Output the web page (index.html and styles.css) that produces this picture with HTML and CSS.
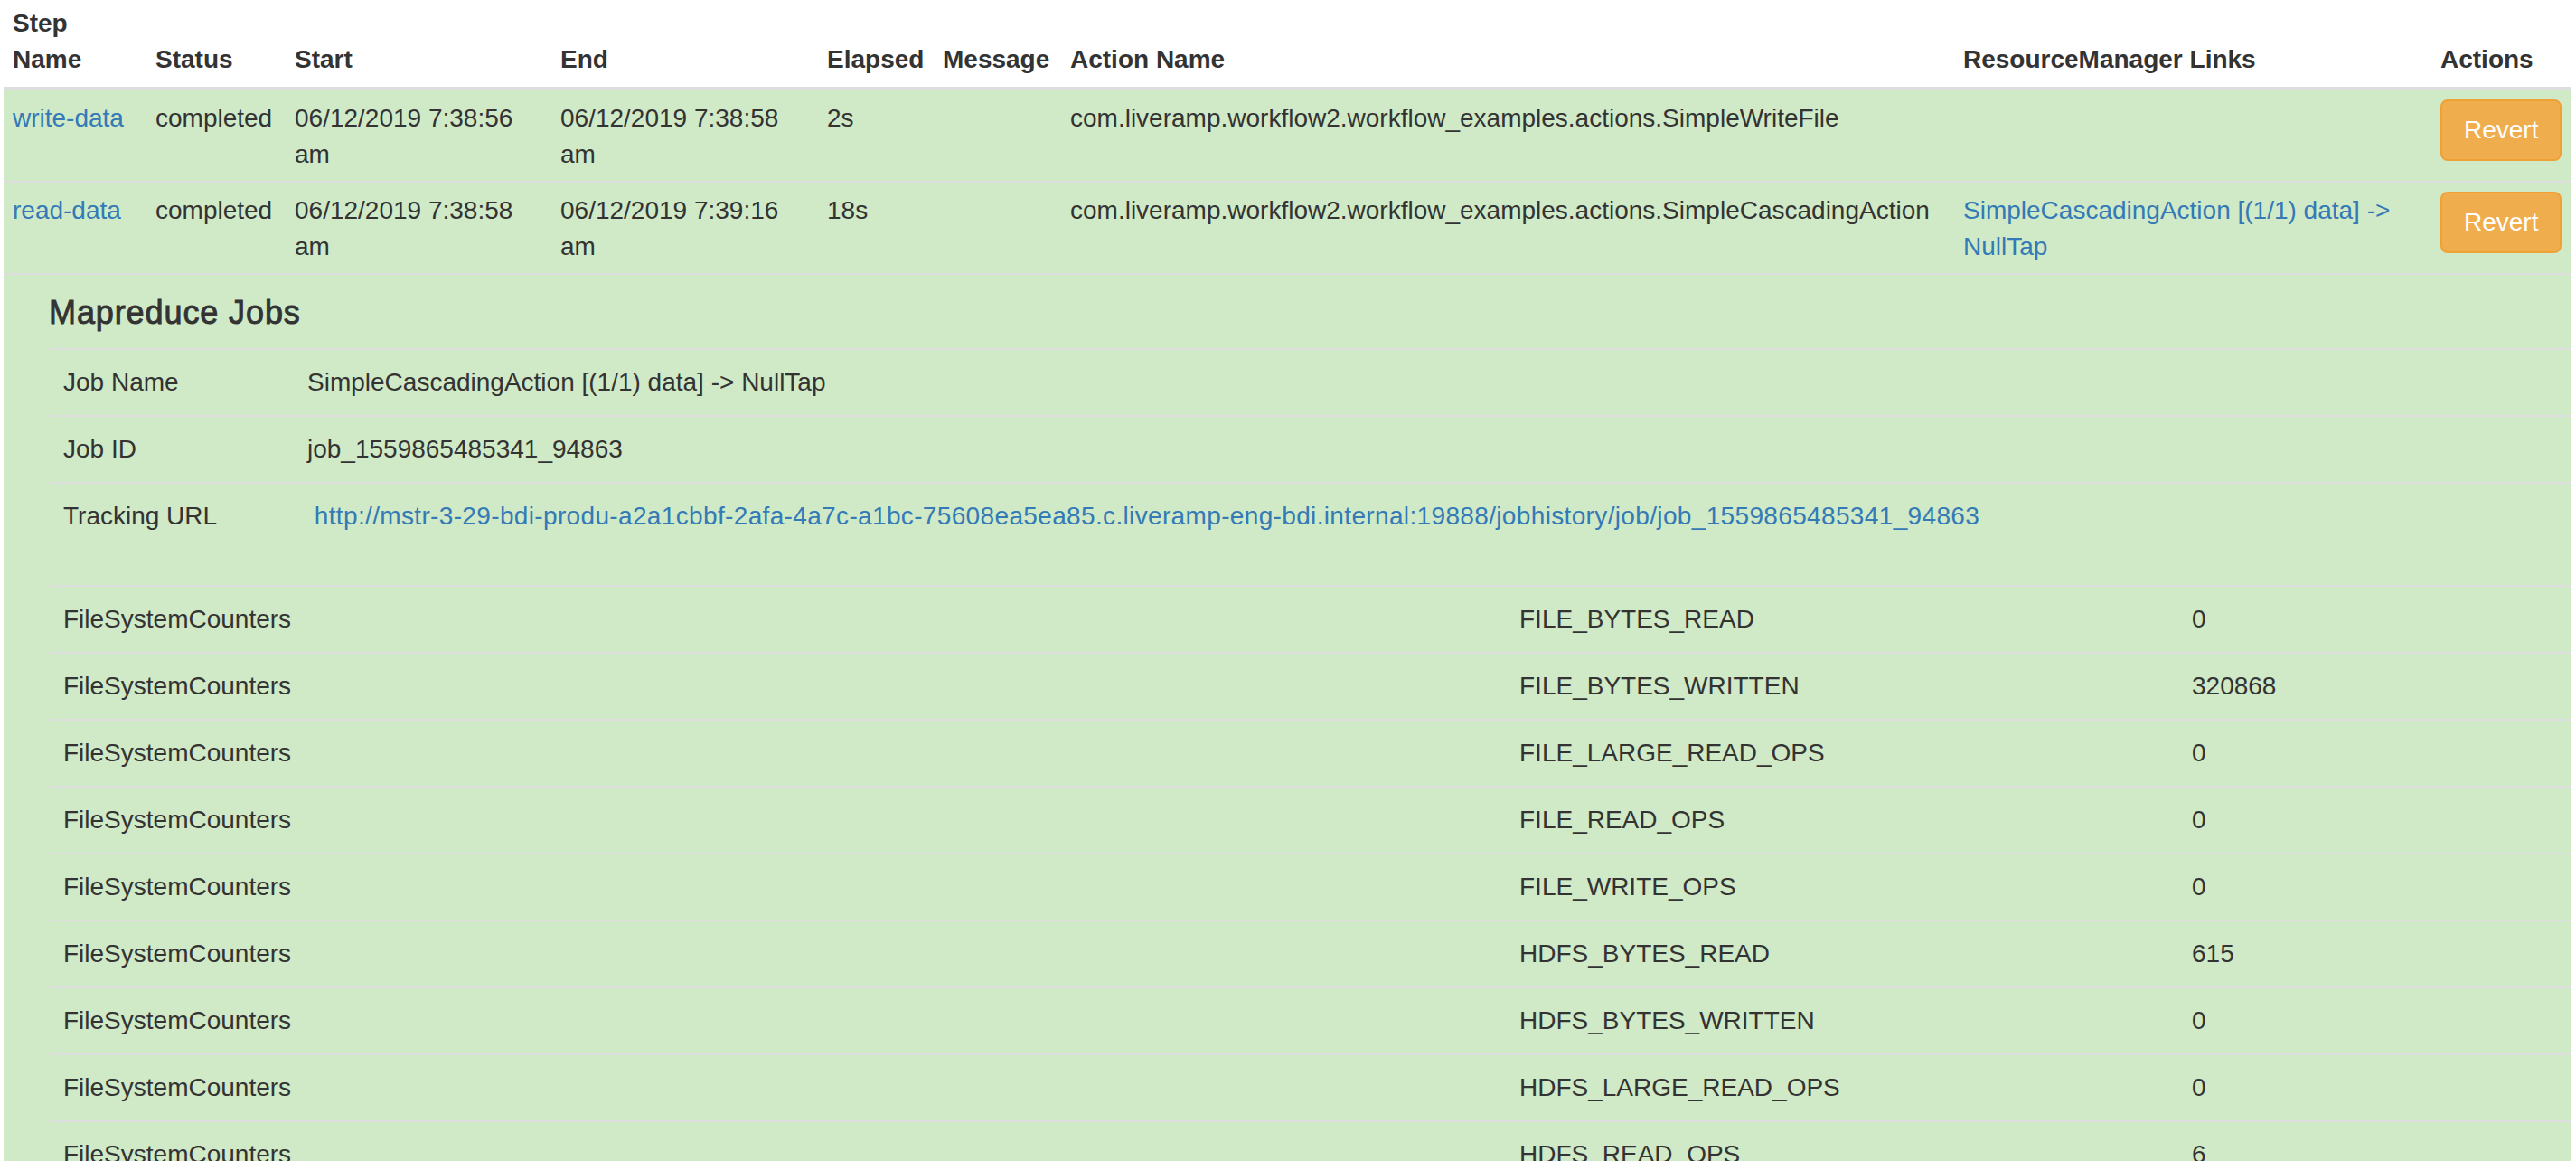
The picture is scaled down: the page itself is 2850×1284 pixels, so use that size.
FILE: index.html
```html
<!DOCTYPE html>
<html>
<head>
<meta charset="utf-8">
<title>Workflow Steps</title>
<link rel="stylesheet" href="styles.css">
</head>
<body>
<table class="steps">
  <colgroup>
    <col class="c-name"><col class="c-status"><col class="c-start"><col class="c-end"><col class="c-elapsed"><col class="c-message"><col class="c-action"><col class="c-links"><col class="c-actions">
  </colgroup>
  <thead>
    <tr>
      <th>Step Name</th>
      <th>Status</th>
      <th>Start</th>
      <th>End</th>
      <th>Elapsed</th>
      <th>Message</th>
      <th>Action Name</th>
      <th>ResourceManager Links</th>
      <th>Actions</th>
    </tr>
  </thead>
  <tbody>
    <tr class="success">
      <td><a href="#">write-data</a></td>
      <td>completed</td>
      <td>06/12/2019 7:38:56 am</td>
      <td>06/12/2019 7:38:58 am</td>
      <td>2s</td>
      <td></td>
      <td>com.liveramp.workflow2.workflow_examples.actions.SimpleWriteFile</td>
      <td></td>
      <td><button class="btn-warning">Revert</button></td>
    </tr>
    <tr class="success">
      <td><a href="#">read-data</a></td>
      <td>completed</td>
      <td>06/12/2019 7:38:58 am</td>
      <td>06/12/2019 7:39:16 am</td>
      <td>18s</td>
      <td></td>
      <td>com.liveramp.workflow2.workflow_examples.actions.SimpleCascadingAction</td>
      <td><a href="#">SimpleCascadingAction [(1/1) data] -&gt; NullTap</a></td>
      <td><button class="btn-warning">Revert</button></td>
    </tr>
    <tr class="success">
      <td class="jobs-cell" colspan="9">
        <h4 class="jobs-title">Mapreduce Jobs</h4>
        <table class="inner job-table">
          <colgroup><col class="j-label"><col></colgroup>
          <tbody>
            <tr><td>Job Name</td><td>SimpleCascadingAction [(1/1) data] -&gt; NullTap</td></tr>
            <tr><td>Job ID</td><td>job_1559865485341_94863</td></tr>
            <tr><td>Tracking URL</td><td>&nbsp;<a class="tracking-link" href="#">http://mstr-3-29-bdi-produ-a2a1cbbf-2afa-4a7c-a1bc-75608ea5ea85.c.liveramp-eng-bdi.internal:19888/jobhistory/job/job_1559865485341_94863</a></td></tr>
          </tbody>
        </table>
        <table class="inner counter-table">
          <colgroup><col class="k-group"><col class="k-name"><col></colgroup>
          <tbody>
            <tr><td>FileSystemCounters</td><td>FILE_BYTES_READ</td><td>0</td></tr>
            <tr><td>FileSystemCounters</td><td>FILE_BYTES_WRITTEN</td><td>320868</td></tr>
            <tr><td>FileSystemCounters</td><td>FILE_LARGE_READ_OPS</td><td>0</td></tr>
            <tr><td>FileSystemCounters</td><td>FILE_READ_OPS</td><td>0</td></tr>
            <tr><td>FileSystemCounters</td><td>FILE_WRITE_OPS</td><td>0</td></tr>
            <tr><td>FileSystemCounters</td><td>HDFS_BYTES_READ</td><td>615</td></tr>
            <tr><td>FileSystemCounters</td><td>HDFS_BYTES_WRITTEN</td><td>0</td></tr>
            <tr><td>FileSystemCounters</td><td>HDFS_LARGE_READ_OPS</td><td>0</td></tr>
            <tr><td>FileSystemCounters</td><td>HDFS_READ_OPS</td><td>6</td></tr>
            <tr><td>FileSystemCounters</td><td>HDFS_WRITE_OPS</td><td>0</td></tr>
            <tr><td>Job Counters</td><td>TOTAL_LAUNCHED_MAPS</td><td>1</td></tr>
          </tbody>
        </table>
      </td>
    </tr>
  </tbody>
</table>
</body>
</html>
```

FILE: styles.css
```css
html, body {
  margin: 0;
  padding: 0;
  background: #fff;
}

body {
  font-family: "Liberation Sans", Arial, sans-serif;
  font-size: 28px;
  line-height: 40px;
  color: #333;
}

a {
  color: #337ab7;
  text-decoration: none;
}

.steps {
  margin-left: 4px;
  width: 2840px;
  border-collapse: collapse;
  border-spacing: 0;
  table-layout: fixed;
}

.c-name { width: 158px; }
.c-status { width: 154px; }
.c-start { width: 294px; }
.c-end { width: 295px; }
.c-elapsed { width: 128px; }
.c-message { width: 141px; }
.c-action { width: 988px; }
.c-links { width: 528px; }
.c-actions { width: 154px; }

.steps > thead > tr > th {
  text-align: left;
  font-weight: bold;
  vertical-align: bottom;
  padding: 6px 10px 10px 10px;
  border-bottom: 4px solid #ddd;
}

.steps > tbody > tr > td {
  padding: 11px 10px 9px 10px;
  vertical-align: top;
  border-top: 2px solid #ddd;
  white-space: normal;
}

.steps > tbody > tr:first-child > td {
  border-top: 0;
}

.steps > tbody > tr.success > td {
  background: #d0e9c6;
}

.btn-warning {
  font-family: "Liberation Sans", Arial, sans-serif;
  font-size: 28px;
  line-height: 40px;
  color: #fff;
  background: #f0ad4e;
  border: 2px solid #eea236;
  border-radius: 8px;
  padding: 12px 24px;
  margin: -1px 0 0 0;
  cursor: pointer;
  display: inline-block;
}

.steps > tbody > tr > td.jobs-cell {
  padding: 2px 0 0 50px;
}

.jobs-title {
  font-size: 36px;
  line-height: 40px;
  font-weight: normal;
  letter-spacing: 0.9px;
  -webkit-text-stroke: 0.9px #333;
  margin: 20px 0 19px 0;
  color: #333;
}

.inner {
  width: 100%;
  border-collapse: collapse;
  border-spacing: 0;
  table-layout: fixed;
  margin-bottom: 40px;
}

.inner > tbody > tr > td {
  padding: 16px;
  vertical-align: top;
  border-top: 2px solid #ddd;
  background: transparent;
}

.tracking-link {
  letter-spacing: 0.35px;
}

.j-label { width: 270px; }
.k-group { width: 1611px; }
.k-name { width: 744px; }
```
